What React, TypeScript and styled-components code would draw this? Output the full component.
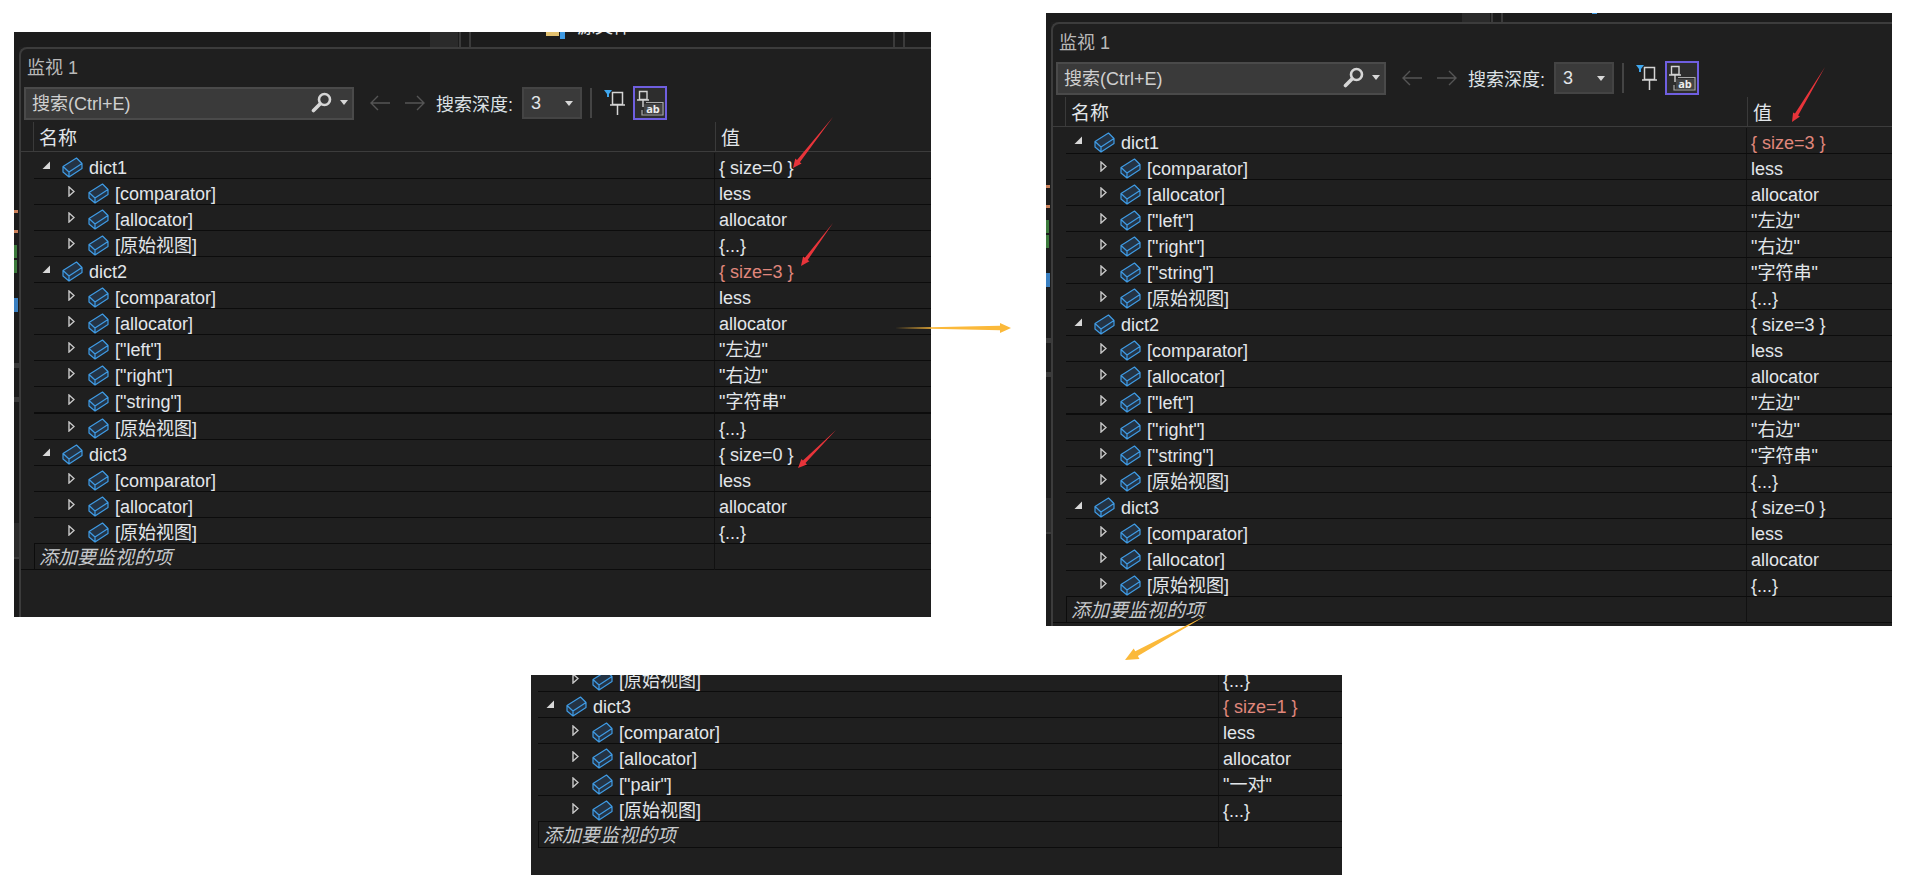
import React, { FC } from 'react'
import styled, { createGlobalStyle } from 'styled-components'

const GlobalStyle = createGlobalStyle`
  html, body {
    margin: 0;
    background: #fff;
  }
  body {
    font-family: "Liberation Sans", "Noto Sans CJK SC", sans-serif;
  }
`

const Page = styled.div`
  position: relative;
  width: 1914px;
  height: 887px;
  overflow: hidden;
`
const TopRow = styled.div`
  display: flex;
  align-items: flex-start;
  padding-left: 14px;
  gap: 115px;
`
const Shot = styled.section<{ $width: number; $height: number; $top?: number; $left?: number }>`
  display: flex;
  flex-direction: column;
  box-sizing: border-box;
  flex-shrink: 0;
  width: ${p => p.$width}px;
  height: ${p => p.$height}px;
  margin-top: ${p => p.$top ?? 0}px;
  margin-left: ${p => p.$left ?? 0}px;
  background: #1f1f1f;
  color: #e2e6ea;
  font-size: 18px;
  overflow: hidden;
`
const EditorStrip = styled.div<{ $height: number }>`
  display: flex;
  align-items: flex-start;
  flex-shrink: 0;
  height: ${p => p.$height}px;
  background: #1c1c1c;
  overflow: hidden;
`
const StripMark = styled.span<{ $gap: number; $w: number; $h?: number; $mt?: number; $color: string }>`
  flex-shrink: 0;
  margin-left: ${p => p.$gap}px;
  margin-top: ${p => p.$mt ?? 0}px;
  width: ${p => p.$w}px;
  height: ${p => p.$h ?? 40}px;
  background: ${p => p.$color};
`
const StripText = styled.span<{ $gap: number }>`
  flex-shrink: 0;
  margin-left: ${p => p.$gap}px;
  margin-top: -17px;
  font-size: 18px;
  line-height: 24px;
`
const Body = styled.div`
  display: flex;
  flex: 1;
  min-height: 0;
`
const Gutter = styled.div`
  display: flex;
  flex-direction: column;
  flex-shrink: 0;
  width: 5px;
  background: #1c1c1c;
`
const GutterMark = styled.span<{ $gap: number; $h: number; $w?: number; $color: string }>`
  margin-top: ${p => p.$gap}px;
  height: ${p => p.$h}px;
  width: ${p => p.$w ?? 5}px;
  background: ${p => p.$color};
`
const Frame = styled.div`
  flex: 1;
  min-width: 0;
  border-top: 2px solid #3c3c3c;
  border-left: 2px solid #3c3c3c;
  border-top-left-radius: 8px;
`
const Title = styled.div`
  display: flex;
  align-items: center;
  box-sizing: border-box;
  height: 37px;
  padding: 0 0 4px 6px;
  color: #b9b9b9;
  font-size: 18px;
`
const Toolbar = styled.div`
  display: flex;
  align-items: center;
  height: 34px;
  margin-bottom: 2px;
  padding-left: 3px;
`
const SearchBox = styled.div`
  display: flex;
  align-items: center;
  box-sizing: border-box;
  width: 330px;
  height: 33px;
  padding: 0 4px 2px 6px;
  background: #3a3a3a;
  border: 2px solid #4a4a4a;
  color: #cfcfcf;
  font-size: 18px;
`
const SearchLabel = styled.span`
  flex: 1;
`
const Caret = styled.span`
  width: 0;
  height: 0;
  border-left: 4.5px solid transparent;
  border-right: 4.5px solid transparent;
  border-top: 5px solid #d8d8d8;
`
const NavIcon = styled.svg<{ $gap: number }>`
  display: block;
  flex-shrink: 0;
  margin-left: ${p => p.$gap}px;
`
const DepthLabel = styled.span`
  margin-left: 11px;
  color: #dde2e6;
  font-size: 18px;
  white-space: nowrap;
  width: 86px;
`
const DepthBox = styled.div`
  display: flex;
  align-items: center;
  justify-content: space-between;
  box-sizing: border-box;
  width: 60px;
  height: 32px;
  padding: 0 7px;
  background: #3a3a3a;
  border: 2px solid #444;
  font-size: 18px;
`
const ToolSeparator = styled.span`
  width: 2px;
  height: 30px;
  margin-left: 8px;
  background: #444;
`
const PinButton = styled.span`
  display: flex;
  margin-left: 12px;
`
const PinToggle = styled.span`
  display: flex;
  align-items: center;
  justify-content: center;
  box-sizing: border-box;
  width: 34px;
  height: 34px;
  margin-left: 7px;
  background: #2d2d2d;
  border: 2px solid #6f5fe0;
`
const ColumnHeader = styled.div`
  display: grid;
  grid-template-columns: 681px 1fr;
  height: 29px;
  margin-left: 12px;
  border-left: 1px solid #3a3a3a;
  font-size: 19px;
`
const HeaderRule = styled.div`
  height: 1px;
  margin-bottom: 1px;
  background: #3c3c3c;
`
const HeaderCell = styled.div<{ $value?: boolean }>`
  display: flex;
  align-items: center;
  padding-left: 5px;
  ${p => p.$value && 'border-left: 1px solid #3a3a3a;'}
`
const RowList = styled.div<{ $indent: number }>`
  margin-left: ${p => p.$indent}px;
`
const Row = styled.div<{ $height?: number; $thick?: boolean }>`
  display: grid;
  grid-template-columns: 680px 1fr;
  grid-template-rows: minmax(0, 1fr);
  box-sizing: border-box;
  height: ${p => (p.$thick ? 27 : p.$height ?? 26)}px;
  border-bottom: ${p => (p.$thick ? 2 : 1)}px solid #0c0c0c;
  overflow: hidden;
`
const NameCell = styled.div<{ $child: boolean }>`
  display: flex;
  align-items: flex-end;
  min-height: 0;
  padding-left: ${p => (p.$child ? 34 : 8)}px;
  white-space: nowrap;
`
const RowInner = styled.div`
  display: flex;
  align-items: center;
  flex-shrink: 0;
  height: 25px;
  margin-bottom: -2px;
`
const NameText = styled.span`
  line-height: 18px;
`
const Expander = styled.span`
  display: flex;
  width: 20px;
  flex-shrink: 0;
`
const TypeIcon = styled.svg`
  display: block;
  flex-shrink: 0;
  margin-right: 6px;
`
const ValueCell = styled.div<{ $changed?: boolean }>`
  display: flex;
  align-items: flex-end;
  min-height: 0;
  padding-left: 4px;
  border-left: 1px solid #111;
  color: ${p => (p.$changed ? '#e0877c' : '#e2e6ea')};
  white-space: nowrap;
`
const ValueText = styled.span`
  display: flex;
  align-items: center;
  flex-shrink: 0;
  height: 25px;
  line-height: 18px;
  margin-bottom: -2px;
`
const AddRow = styled.div`
  display: grid;
  grid-template-columns: 680px 1fr;
  box-sizing: border-box;
  height: 26px;
  border-bottom: 1px solid #0c0c0c;
`
const AddName = styled.div`
  box-sizing: border-box;
  padding: 1px 0 0 4px;
  border-left: 1px solid #0c0c0c;
  line-height: 25px;
  font-size: 19px;
  font-style: italic;
  color: #c6c9cc;
`
const AddValue = styled.div`
  border-left: 1px solid #111;
`
const AddRule = styled.div`
  height: 1px;
  margin-top: -1px;
  background: #0c0c0c;
`
const Overlay = styled.svg`
  position: absolute;
  left: 0;
  top: 0;
  pointer-events: none;
`

const BoxIcon: FC = () => (
  <TypeIcon width="21" height="21" viewBox="0 0 21 21" fill="none">
    <path d="M1 9.5 L14.5 1 L20 6.5 L20 11.5 L7 20 L1 15 Z" fill="#243344" />
    <path
      d="M1 9.5 L14.5 1 L20 6.5 L20 11.5 L7 20 L1 15 Z M1 9.5 L7 15 L20 6.5 M7 15 L7 20"
      stroke="#3f9be4"
      strokeWidth="1.2"
      strokeLinejoin="round"
    />
  </TypeIcon>
)

const ExpandedArrow: FC = () => (
  <svg width="9" height="9" viewBox="0 0 9 9" style={{ marginTop: -4 }}>
    <path d="M0.5 8 L8 8 L8 0.5 Z" fill="#d8d8d8" />
  </svg>
)

const CollapsedArrow: FC = () => (
  <svg width="7" height="11" viewBox="0 0 7 11" style={{ marginTop: -4 }}>
    <path d="M1 1 L6 5.5 L1 10 Z" fill="none" stroke="#c8c8c8" strokeWidth="1.4" />
  </svg>
)

const SearchIcon: FC = () => (
  <svg width="21" height="21" viewBox="0 0 21 21" fill="none" style={{ marginRight: 8 }}>
    <circle cx="13.5" cy="7.5" r="5.5" stroke="#d6d6d6" strokeWidth="2.6" />
    <path d="M9 12 L2.5 18.5" stroke="#d6d6d6" strokeWidth="3.6" strokeLinecap="round" />
  </svg>
)

const LeftArrow: FC = () => (
  <NavIcon $gap={16} width="20" height="16" viewBox="0 0 20 16" fill="none">
    <path d="M20 8 L1 8 M8 1 L1 8 L8 15" stroke="#555" strokeWidth="1.4" />
  </NavIcon>
)

const RightArrow: FC = () => (
  <NavIcon $gap={15} width="20" height="16" viewBox="0 0 20 16" fill="none">
    <path d="M0 8 L19 8 M12 1 L19 8 L12 15" stroke="#555" strokeWidth="1.4" />
  </NavIcon>
)

const FilterPin: FC = () => (
  <svg width="22" height="26" viewBox="0 0 22 26" fill="none">
    <path d="M0 0 L8 0 L5 4 L5 7 L3 7 L3 4 Z" fill="#3fa7ee" />
    <path d="M8.5 2.5 L18.5 2.5 L18.5 14.5 L8.5 14.5 Z M6 15 L21 15 M13.5 15 L13.5 25" stroke="#d4d4d4" strokeWidth="1.5" />
  </svg>
)

const ValuePin: FC = () => (
  <svg width="28" height="26" viewBox="0 0 28 26" fill="none">
    <path d="M3.5 1.5 L11 1.5 L11 9.5 L3.5 9.5 Z M1 10 L13 10 M7 10 L7 17" stroke="#d4d4d4" strokeWidth="1.4" />
    <path d="M10 12.5 L27 12.5 L27 25 L6 25 L6 20" stroke="#a8a8a8" strokeWidth="1.2" />
    <rect x="8" y="14" width="18" height="10" fill="#444" />
    <text x="17" y="22.5" fill="#eee" fontSize="11" fontWeight="700" textAnchor="middle" fontFamily="Open Sans, sans-serif">
      ab
    </text>
  </svg>
)

interface ArrowProps {
  from: [number, number]
  to: [number, number]
  color: string
  size: number
}

// tapered annotation arrow, thin at the tail
const Arrow: FC<ArrowProps> = ({ from, to, color, size }) => {
  const dx = to[0] - from[0]
  const dy = to[1] - from[1]
  const len = Math.hypot(dx, dy)
  const ux = dx / len
  const uy = dy / len
  const nx = -uy
  const ny = ux
  const head = size * 2.2
  const bx = to[0] - ux * head
  const by = to[1] - uy * head
  const pts = [
    from,
    [bx + nx * size * 0.45, by + ny * size * 0.45],
    [bx + nx * size, by + ny * size],
    to,
    [bx - nx * size, by - ny * size],
    [bx - nx * size * 0.45, by - ny * size * 0.45],
  ]
  return <polygon points={pts.map(p => p.join(',')).join(' ')} fill={color} />
}

interface WatchRow {
  name: string
  value: string
  child?: boolean
  changed?: boolean
  height?: number
  thick?: boolean
}

const kid = (name: string, value: string): WatchRow => ({ name, value, child: true })

const base = [kid('[comparator]', 'less'), kid('[allocator]', 'allocator')]
const left = kid('["left"]', '"左边"')
const right = kid('["right"]', '"右边"')
const str = kid('["string"]', '"字符串"')
const raw = kid('[原始视图]', '{...}')

const firstRows: WatchRow[] = [
  { name: 'dict1', value: '{ size=0 }' },
  ...base,
  raw,
  { name: 'dict2', value: '{ size=3 }', changed: true },
  ...base,
  left,
  right,
  { ...str, thick: true },
  raw,
  { name: 'dict3', value: '{ size=0 }' },
  ...base,
  raw,
]

const secondRows: WatchRow[] = [
  { name: 'dict1', value: '{ size=3 }', changed: true },
  ...base,
  left,
  right,
  str,
  raw,
  { name: 'dict2', value: '{ size=3 }' },
  ...base,
  { ...left, thick: true },
  right,
  str,
  raw,
  { name: 'dict3', value: '{ size=0 }' },
  ...base,
  raw,
]

const thirdRows: WatchRow[] = [
  { ...raw, height: 17 },
  { name: 'dict3', value: '{ size=1 }', changed: true },
  ...base,
  kid('["pair"]', '"一对"'),
  raw,
]

const WatchRows: FC<{ rows: WatchRow[]; indent: number }> = ({ rows, indent }) => (
  <RowList $indent={indent}>
    {rows.map((r, i) => (
      <Row key={i} $height={r.height} $thick={r.thick}>
        <NameCell $child={!!r.child}>
          <RowInner>
            <Expander>{r.child ? <CollapsedArrow /> : <ExpandedArrow />}</Expander>
            <BoxIcon />
            <NameText>{r.name}</NameText>
          </RowInner>
        </NameCell>
        <ValueCell $changed={r.changed}>
          <ValueText>{r.value}</ValueText>
        </ValueCell>
      </Row>
    ))}
    <AddRow>
      <AddName>添加要监视的项</AddName>
      <AddValue />
    </AddRow>
  </RowList>
)

const WatchWindow: FC<{ rows: WatchRow[] }> = ({ rows }) => (
  <Frame>
    <Title>监视 1</Title>
    <Toolbar>
      <SearchBox>
        <SearchLabel>搜索(Ctrl+E)</SearchLabel>
        <SearchIcon />
        <Caret />
      </SearchBox>
      <LeftArrow />
      <RightArrow />
      <DepthLabel>搜索深度:</DepthLabel>
      <DepthBox>
        3
        <Caret />
      </DepthBox>
      <ToolSeparator />
      <PinButton>
        <FilterPin />
      </PinButton>
      <PinToggle>
        <ValuePin />
      </PinToggle>
    </Toolbar>
    <ColumnHeader>
      <HeaderCell>名称</HeaderCell>
      <HeaderCell $value>值</HeaderCell>
    </ColumnHeader>
    <HeaderRule />
    <WatchRows rows={rows} indent={13} />
    <AddRule />
  </Frame>
)

// bits of the code editor that show left of the docked window
const EditorGutter: FC = () => (
  <Gutter>
    <GutterMark $gap={163} $h={3} $w={4} $color="#c9805a" />
    <GutterMark $gap={17} $h={3} $w={4} $color="#c9805a" />
    <GutterMark $gap={12} $h={13} $w={3} $color="#3c7a3c" />
    <GutterMark $gap={2} $h={13} $w={3} $color="#3c7a3c" />
    <GutterMark $gap={25} $h={14} $w={4} $color="#3a7fc0" />
    <GutterMark $gap={51} $h={5} $color="#3a3a3a" />
    <GutterMark $gap={29} $h={5} $color="#3a3a3a" />
    <GutterMark $gap={121} $h={34} $color="#2b2b2b" />
    <GutterMark $gap={0} $h={2} $color="#3a3a3a" />
  </Gutter>
)

const App: FC = () => (
  <Page>
    <GlobalStyle />
    <TopRow>
      <Shot $width={917} $height={585} $top={32}>
        <EditorStrip $height={15}>
          <StripMark $gap={416} $w={28} $color="#2a2a2a" />
          <StripMark $gap={1} $w={2} $color="#3a3a3a" />
          <StripMark $gap={8} $w={2} $color="#3a3a3a" />
          <StripMark $gap={75} $w={13} $h={4} $color="#e3c16f" />
          <StripMark $gap={1} $w={5} $h={7} $color="#3f9be4" />
          <StripText $gap={12}>源文件</StripText>
          <StripMark $gap={262} $w={2} $color="#3a3a3a" />
          <StripMark $gap={8} $w={2} $color="#3a3a3a" />
        </EditorStrip>
        <Body>
          <EditorGutter />
          <WatchWindow rows={firstRows} />
        </Body>
      </Shot>
      <Shot $width={846} $height={613} $top={13}>
        <EditorStrip $height={9}>
          <StripMark $gap={416} $w={28} $color="#2a2a2a" />
          <StripMark $gap={1} $w={2} $color="#3a3a3a" />
          <StripMark $gap={8} $w={2} $color="#3a3a3a" />
          <StripMark $gap={89} $w={5} $h={1} $color="#3f9be4" />
        </EditorStrip>
        <Body>
          <EditorGutter />
          <WatchWindow rows={secondRows} />
        </Body>
      </Shot>
    </TopRow>
    <Shot $width={811} $height={200} $top={49} $left={531}>
      <WatchRows rows={thirdRows} indent={7} />
    </Shot>
    <Overlay width="1914" height="887" viewBox="0 0 1914 887">
      <Arrow from={[833, 117]} to={[793, 168]} color="#e8343a" size={4} />
      <Arrow from={[833, 223]} to={[801, 266]} color="#e8343a" size={4} />
      <Arrow from={[836, 430]} to={[798, 468]} color="#e8343a" size={4} />
      <Arrow from={[1825, 67]} to={[1792, 122]} color="#e8343a" size={4} />
      <Arrow from={[895, 328]} to={[1011, 328]} color="#fbb93a" size={5} />
      <Arrow from={[1207, 615]} to={[1125, 660]} color="#fbb93a" size={6} />
    </Overlay>
  </Page>
)

export default App
